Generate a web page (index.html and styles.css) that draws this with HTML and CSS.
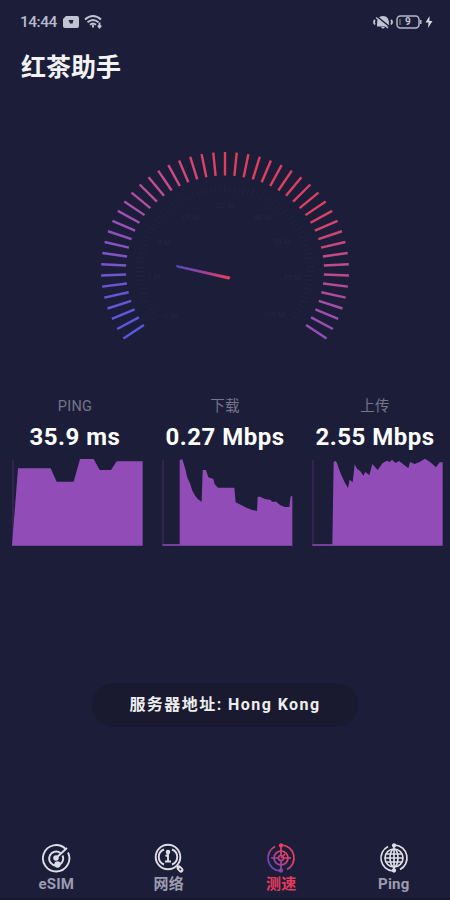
FILE: index.html
```html
<!DOCTYPE html>
<html lang="zh-CN">
<head>
<meta charset="utf-8">
<title>红茶助手</title>
<link rel="stylesheet" href="styles.css">
</head>
<body>
<div class="screen">
  <header class="status">
    <span class="clock">14:44</span>
    <svg class="sim" width="18" height="14" viewBox="0 0 18 14"><path d="M4 1h11q2 0 2 2v8q0 2-2 2H3q-2 0-2-2V4z" fill="#c1c2d2"/><path d="M6.500 5h5L10.500 8.500H8z" fill="#22243e"/></svg>
    <svg class="wifi" width="20" height="16" viewBox="0 0 20 16" fill="none" stroke="#c1c2d2" stroke-width="1.900"><path d="M1 5.500Q9 -1.500 17 5.500M3.500 8.300Q9 3.500 14.500 8.300M6 10.800Q9 8.300 12 10.800"/><path d="M9 10.500v3M15.500 8.500v4.500M13.800 11.500l1.700 2 1.700-2"/></svg>
    <span class="spacer"></span>
    <svg width="20" height="16" viewBox="0 0 20 16"><path d="M4 11Q3.500 2 10 2t6 9l.500 1.500H4zM8 13h4q-2 3-4 0" fill="#c1c2d2"/><path d="M2 6Q0 8 2 10.500M18 6Q20 8 18 10.500" fill="none" stroke="#c1c2d2" stroke-width="1.800"/><path d="M4 2.500l13 10.500" stroke="#1c1e39" stroke-width="1.600"/><path d="M3 3.500l12 10.500" stroke="#c1c2d2" stroke-width="1.200"/></svg>
    <svg class="battery" width="26" height="14" viewBox="0 0 26 14"><rect x="1" y="1" width="22" height="12" rx="3.500" fill="none" stroke="#b6b7ca" stroke-width="1.500"/><path d="M24.800 5v4" stroke="#b6b7ca" stroke-width="1.500"/><path d="M4 4v6" stroke="#75704c" stroke-width="1.500"/><text x="11.800" y="10.400" class="charge">9</text></svg>
    <svg class="bolt" width="8" height="12" viewBox="0 0 8 12"><path d="M4.500 0L.5 6.500h3L3 12l4.500-7h-3z" fill="#d4d5e1"/></svg>
  </header>
  <h1>红茶助手</h1>

  <svg class="gauge" id="gauge" width="450" height="210" viewBox="0 140 450 210">
    <defs><linearGradient id="needle" gradientUnits="userSpaceOnUse" x1="177" y1="266" x2="230" y2="278"><stop offset="0" stop-color="#554bd0"/><stop offset=".55" stop-color="#a34392"/><stop offset="1" stop-color="#ed405e"/></linearGradient></defs>
    <g id="ticks" stroke-width="2.400"></g>
    <g id="minor" stroke="#22233f" stroke-width="1"></g>
    <g class="scale">
      <text x="171" y="318">0 M</text><text x="154" y="279">1 M</text><text x="164" y="245">5 M</text><text x="190" y="220">10 M</text><text x="225" y="208">20 M</text><text x="262" y="220">30 M</text><text x="282" y="244">50 M</text><text x="292" y="280">75 M</text><text x="274" y="317">100 M</text>
    </g>
    <path d="M176.500 265.500L177 267 229 279.200 230 277z" fill="url(#needle)" stroke="url(#needle)" stroke-width=".8"/>
  </svg>

  <section class="metrics">
    <div class="metric">
      <div class="label">PING</div><div class="value">35.9 ms</div>
      <svg width="150" height="90" viewBox="0 204 450 270"><path class="axis" d="M39 210V467"/><path class="area" d="M36 467L54 235H152L170 275H221L240 207H281L299 240H333L350 214H428V467z"/></svg>
    </div>
    <div class="metric">
      <div class="label">下载</div><div class="value">0.27 Mbps</div>
      <svg width="150" height="90" viewBox="0 204 450 270"><path class="axis" d="M39 210V464"/><path class="area" d="M37 463H89V210L97 208 106 237 112 263 120 280 127 302 136 318 144 328 155 335 158 240H168L175 262 190 267 194 283 204 293H253L257 337 275 346 289 353 307 360 321 363 323 320H330L345 327 362 330 366 335H379L390 345 404 351H418L422 319H427V467H37z"/></svg>
    </div>
    <div class="metric">
      <div class="label">上传</div><div class="value">2.55 Mbps</div>
      <svg width="150" height="90" viewBox="0 204 450 270"><path class="axis" d="M39 210V464"/><path class="area" d="M37 463H97L101 217 106 212 111 219 116 235 125 257 135 279 144 294 149 269 158 277 164 223 171 236 181 244 190 257 196 246 208 256 217 222 233 240 248 219 261 212 269 216 276 209 287 219 297 213 310 223 325 235 330 216 344 222 360 215 375 206 391 217 408 232 419 217H428V467H37z"/></svg>
    </div>
  </section>

  <div class="server">服务器地址: Hong Kong</div>

  <nav>
    <a class="tab">
      <svg width="32" height="32" viewBox="0 0 32 32" fill="none" stroke="currentColor" stroke-width="1.900"><path d="M25.500 7A13.200 13.200 0 1 0 28 10.500"/><path d="M20.500 11A7 7 0 1 0 22.500 13.500"/><path d="M16 16L27 6"/><circle cx="16" cy="16" r="1.800" fill="currentColor"/><circle cx="17.500" cy="22.500" r="2.200" fill="currentColor"/></svg>
      <span>eSIM</span>
    </a>
    <a class="tab">
      <svg width="32" height="32" viewBox="0 0 32 32" fill="none" stroke="currentColor" stroke-width="1.900"><circle cx="15" cy="15" r="12.300"/><path d="M11 7.500A8 8 0 0 0 11 22.500M19 7.500A8 8 0 0 1 19 22.500M12.500 14l2.500-1v6M12 19.500h6"/><circle cx="15" cy="10" r="1.300" fill="currentColor"/><path d="M24 24l2 2"/><path d="M26 26l2 2" stroke-width="5" stroke-linecap="round"/><path d="M26.500 26.500l1.500 1.500" stroke="#1c1e39" stroke-width="1.500"/></svg>
      <span>网络</span>
    </a>
    <a class="tab active">
      <svg width="32" height="32" viewBox="0 0 32 32" fill="none" stroke="url(#hot)" stroke-width="1.700"><defs><linearGradient id="hot" gradientUnits="userSpaceOnUse" x1="3" y1="27" x2="19" y2="11"><stop stop-color="#5349d8"/><stop offset="1" stop-color="#e83f63"/></linearGradient></defs><path d="M10 4.500A13 13 0 0 0 15 29M22 27.500A13 13 0 0 0 17 3"/><circle cx="16" cy="16" r="7"/><path d="M16 3v10M16 19v10M6 16h7M19 16h7M16 16l4-4"/><circle cx="16" cy="16" r="2.500"/><circle cx="16" cy="3.500" r="1.300" fill="url(#hot)"/><circle cx="16" cy="28.500" r="1.300" fill="url(#hot)"/></svg>
      <span>测速</span>
    </a>
    <a class="tab">
      <svg width="32" height="32" viewBox="0 0 32 32" fill="none" stroke="currentColor" stroke-width="1.700"><path d="M10 4.500A13 13 0 0 0 15 29M22 27.500A13 13 0 0 0 17 3"/><circle cx="16" cy="16" r="9"/><ellipse cx="16" cy="16" rx="4" ry="9"/><path d="M16 3v26M7 16h18M8.500 12h15M8.500 20h15"/><circle cx="16" cy="3.500" r="1.300" fill="currentColor"/><circle cx="16" cy="28.500" r="1.300" fill="currentColor"/></svg>
      <span>Ping</span>
    </a>
  </nav>
</div>
<script src="gauge.js"></script>
</body>
</html>
```
FILE: styles.css
```css
* { box-sizing: border-box; }
body { margin: 0; background: #1c1e39; font-family: Roboto, "Noto Sans CJK SC", sans-serif; }
.screen { width: 450px; height: 900px; display: flex; flex-direction: column; overflow: hidden; border-bottom: 2px solid #141629; }
.status { height: 44px; flex: none; display: flex; align-items: center; padding: 0 17px 0 20px; color: #b8b9cb; }
.clock { font-size: 15.500px; font-weight: 500; width: 42px; letter-spacing: -.5px; }
.wifi { margin-left: 4px; }
.spacer { flex: 1; }
.battery { margin-left: 3px; }
.bolt { margin-left: 3px; }
.charge { font-size: 10px; font-weight: 700; fill: #c1c2d2; text-anchor: middle; }
h1 { flex: none; height: 46px; margin: 0; padding-left: 21px; font-size: 25px; line-height: 48px; font-weight: 700; color: #f3f3f5; }
.gauge { flex: none; margin-top: 50px; display: block; }
.scale { font-size: 8px; fill: #242542; text-anchor: middle; }
.metrics { flex: none; display: grid; grid-template-columns: repeat(3, 150px); margin-top: 45px; }
.metric { text-align: center; }
.metric svg { display: block; }
.label { height: 23px; line-height: 24px; font-size: 14.500px; letter-spacing: .3px; color: #74758a; }
.value { height: 40px; line-height: 38px; font-size: 24px; letter-spacing: .5px; font-weight: 700; color: #fff; white-space: nowrap; }
.area { fill: #914cb8; }
.axis { stroke: #4a2b66; stroke-width: 3; fill: none; }
.server { flex: none; align-self: center; width: 266px; height: 44px; margin-top: 135px; border-radius: 22px; background: #191a30; color: #eee; font-size: 16px; font-weight: 700; line-height: 44px; text-align: center; letter-spacing: 1.450px; white-space: nowrap; }
nav { flex: none; margin-top: 115px; display: grid; grid-template-columns: repeat(4, 112.500px); }
.tab { display: flex; flex-direction: column; align-items: center; color: #dedee5; }
.tab svg { display: block; }
.tab span { height: 20px; line-height: 20px; font-size: 15px; font-weight: 700; color: #9c9caf; letter-spacing: .2px; }
.tab.active span { color: #e43b5d; }
```
FILE: gauge.js
```javascript
const NS = "http://www.w3.org/2000/svg";
const stops = [[0, 88, 88, 224], [6, 112, 84, 208], [12, 160, 80, 178], [17, 202, 76, 140], [21, 222, 66, 102], [23, 226, 62, 92], [33, 222, 64, 96], [38, 196, 74, 132], [46, 148, 78, 188]];

function colorAt(i) {
  let k = 1;
  while (i > stops[k][0]) k++;
  const a = stops[k - 1], b = stops[k];
  const t = (i - a[0]) / (b[0] - a[0]);
  return "rgb(" + [1, 2, 3].map(c => Math.round(a[c] + (b[c] - a[c]) * t)).join(",") + ")";
}

function ring(id, count, outer, inner, paint) {
  const group = document.getElementById(id);
  for (let i = 0; i < count; i++) {
    const angle = (215 - 250 * i / (count - 1)) * Math.PI / 180;
    const line = document.createElementNS(NS, "line");
    line.setAttribute("x1", 225 + outer[0] * Math.cos(angle));
    line.setAttribute("y1", 270.5 - outer[1] * Math.sin(angle));
    line.setAttribute("x2", 225 + inner[0] * Math.cos(angle));
    line.setAttribute("y2", 270.5 - inner[1] * Math.sin(angle));
    if (paint) line.setAttribute("stroke", paint(i));
    group.appendChild(line);
  }
}

ring("ticks", 47, [124, 118.5], [99, 95], colorAt);
ring("minor", 81, [89, 85], [81, 78]);
```
